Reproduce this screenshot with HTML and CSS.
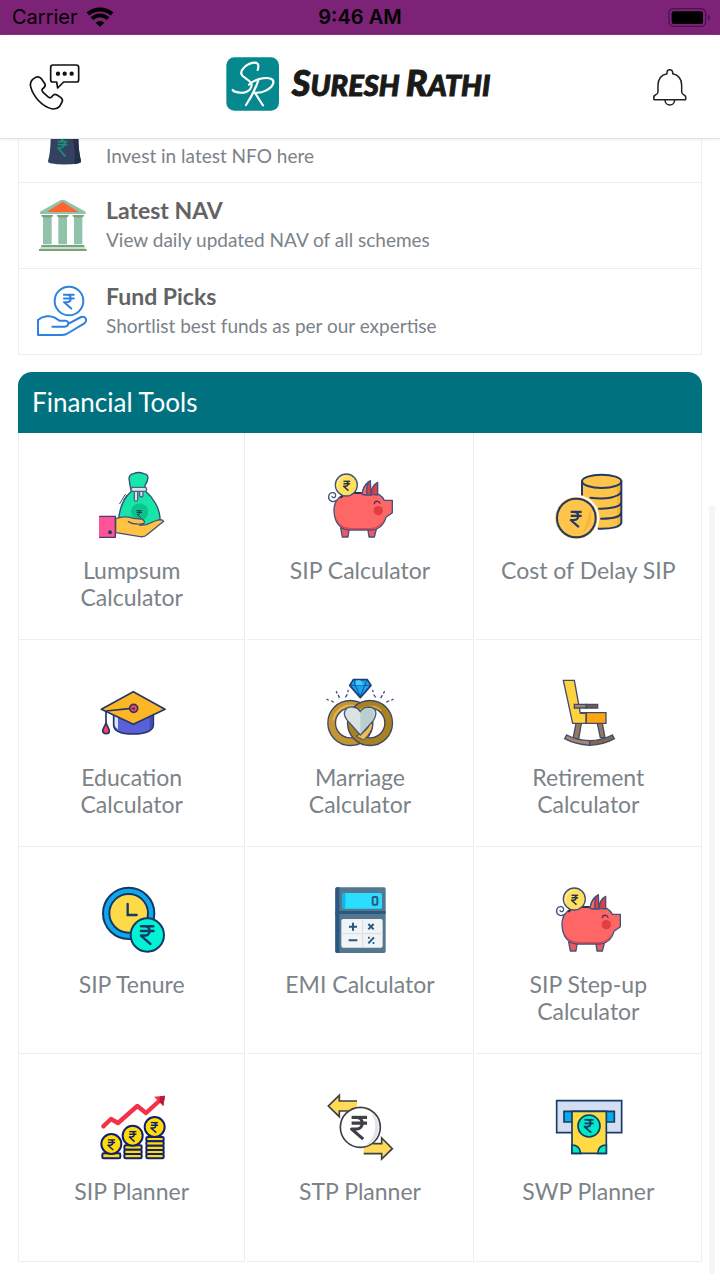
FILE: index.html
```html
<!DOCTYPE html>
<html lang="en">
<head>
<meta charset="utf-8">
<meta name="viewport" content="width=device-width, initial-scale=1">
<title>Suresh Rathi</title>
<link rel="stylesheet" href="styles.css">
</head>
<body>
<svg class="defs" aria-hidden="true">
  <symbol id="rupee" viewBox="0 0 20 26"><path d="M2 2H18M2 8H18M2 2H7C15 2 15 14 7 14H2L14 24.500" fill="none" stroke="currentColor" stroke-width="3.200" stroke-linejoin="round"/></symbol>
  <symbol id="pig" viewBox="42 27 216 216">
    <g stroke="#43527c" stroke-width="4" stroke-linejoin="round" stroke-linecap="round">
      <path d="M80 121C67 130 54 121 56 108C58 96 75 94 77 105C78 113 68 116 66 109" fill="none"/>
      <path d="M92 204L97 231H114L118 204ZM173 204L177 231H193L200 204Z" fill="#ed5961"/>
      <path d="M72 150C72 120 96 98 126 98H185C204 98 216 108 223 121H247V158L228 172C220 199 203 210 180 210H119C90 210 72 185 72 150Z" fill="#ff6666"/>
      <path d="M156 103C159 83 168 69 181 62L183 106ZM184 103C184 83 193 72 203 67V105Z" fill="#dd3d45"/>
      <path d="M156 103C159 85 167 73 174 68C170 83 169 94 171 105Z" fill="#ff6666"/>
      <path d="M93 112L106 99H151" fill="none" stroke="#26324f" stroke-width="6"/>
      <circle cx="109" cy="75" r="33" fill="#ffe05c"/>
      <path d="M193 131C194 122 207 121 210 130" fill="none" stroke="#652f4c"/>
    </g>
    <path d="M79 174C91 207 120 204 148 204H182C201 204 217 190 223 173C217 194 207 207 181 208H120C97 208 84 194 79 174Z" fill="#dc4651"/>
    <circle cx="205" cy="152" r="14" fill="#df3f42"/>
    <path d="M84 88A29 29 0 0 1 106 49" fill="none" stroke="#fff09d" stroke-width="4"/>
    <use href="#rupee" x="98" y="61" width="25" height="33" color="#27324b"/>
  </symbol>
</svg>

<div class="status">
  <div class="carrier"><span>Carrier</span>
    <svg width="28" height="21" viewBox="258 21 84 63" fill="none" stroke="#000"><path d="M264 42C284 24 316 24 336 42" stroke-width="12"/><path d="M276 56C289 43 311 43 324 56" stroke-width="11"/><path d="M287 68Q300 58 313 68L300 80Z" fill="#000" stroke="none"/></svg>
  </div>
  <time>9:46 AM</time>
  <svg class="battery" width="44" height="21" viewBox="924 21 132 63"><rect x="927" y="26" width="110" height="53" rx="13" fill="none" stroke="#48144a" stroke-width="4"/><rect x="935" y="34" width="94" height="38" rx="6"/><path d="M1044 43Q1056 53 1044 63Z" fill="#48144a"/></svg>
</div>

<header class="topbar">
  <button class="icon-button" type="button" aria-label="Contact us">
    <svg width="52" height="50" viewBox="84 186 156 150" fill="none" stroke="#111" stroke-width="5" stroke-linejoin="round" stroke-linecap="round">
      <path d="M159 195H229Q236 195 236 202V239Q236 246 229 246H191L173 264L170 246H159Q152 246 152 239V202Q152 195 159 195Z"/>
      <path d="M98 238L107 232Q116 228 123 235L135 252Q138 260 128 266Q123 270 130 278L146 292Q153 296 158 287Q163 281 171 285L183 293Q190 300 186 306L179 319Q171 328 158 327C125 320 99 288 92 260Q89 247 98 238Z"/>
      <g fill="#111" stroke="none"><circle cx="174" cy="221" r="6.500"/><circle cx="194" cy="221" r="6.500"/><circle cx="215" cy="221" r="6.500"/></g>
    </svg>
  </button>
  <a class="brand" href="#">
    <svg width="53" height="54" viewBox="675 171 159 162" aria-hidden="true">
      <rect x="676" y="172" width="158" height="160" rx="24" fill="#05898f"/>
      <g fill="none" stroke="#fff" stroke-width="6.500" stroke-linecap="round" stroke-linejoin="round">
        <path d="M770 210C775 195 771 187 759 188C735 191 716 211 722 224C726 234 753 241 752 255C750 275 728 281 711 277C703 276 697 274 695 270"/>
        <path d="M773 238C764 265 751 292 735 315M744 254C761 238 791 230 810 236C824 242 816 261 796 271C785 277 774 279 761 278C771 291 778 306 786 316"/>
      </g>
    </svg>
    <span class="brand-name"><b>S</b>URESH <b>R</b>ATHI</span>
  </a>
  <button class="icon-button" type="button" aria-label="Notifications">
    <svg width="36" height="40" viewBox="876 201 108 120" fill="none" stroke="#222" stroke-width="4.500" stroke-linejoin="round">
      <path d="M921 221V216Q922 209 929 209Q937 209 938 216V221C957 225 965 239 965 256V276Q966 283 972 285Q979 287 977 299H882Q879 288 886 285Q893 283 894 276V256C894 239 902 225 921 221Z"/><path d="M915 300C915 320 944 320 944 300"/>
    </svg>
  </button>
</header>

<main class="content">
  <nav class="links">
    <a class="link link-cut" href="#">
      <svg width="52" height="26" viewBox="111 417 156 78"><path d="M152 417H235Q236 455 243 483Q244 488 236 490Q193 497 151 490Q143 488 144 483Q151 460 152 417Z" fill="#334260"/><path d="M218 417H235Q236 455 243 483Q244 488 236 490L222 493Q229 454 218 417Z" fill="#252f48"/><path d="M173 425H202M173 434H202M183 419Q198 424 192 437Q187 445 175 445L196 469" fill="none" stroke="#169180" stroke-width="5"/></svg>
      <span class="link-text"><span class="desc">Invest in latest NFO here</span></span>
    </a>
    <a class="link" href="#">
      <svg width="52" height="54" viewBox="111 54 156 162"><path d="M120 95L181 61Q188 57 195 61L257 95V102H120Z" fill="#91c2aa"/><path d="M141 96L188 65L236 96Z" fill="#ff6531"/><path d="M129 112H155V193H129ZM175 112H201V193H175ZM222 112H247V193H222Z" fill="#91c2aa"/><path d="M123 105H160Q158 113 150 113H133Q125 113 123 105ZM170 105H207Q205 113 197 113H179Q172 113 170 105ZM217 105H253Q251 113 243 113H226Q219 113 217 105ZM124 195H253V201H124ZM117 207H260V213H117Z" fill="#7ba27c"/><path d="M121 202H256V206H121Z" fill="#b4d5bd"/></svg>
      <span class="link-text"><span class="title">Latest NAV</span><span class="desc">View daily updated NAV of all schemes</span></span>
    </a>
    <a class="link" href="#">
      <svg width="52" height="54" viewBox="111 312 156 162" fill="none" stroke="#2d81df" stroke-width="6" stroke-linejoin="round" stroke-linecap="round"><circle cx="207" cy="363" r="43"/><path d="M114 420V465H186Q197 465 205 459L253 430Q261 424 257 415Q252 408 243 411L206 431M114 420C130 407 151 406 164 413L178 422H196Q206 423 205 431Q204 439 194 440H157"/><use href="#rupee" x="188" y="339" width="37" height="51" color="#2d81df"/></svg>
      <span class="link-text"><span class="title">Fund Picks</span><span class="desc">Shortlist best funds as per our expertise</span></span>
    </a>
  </nav>

  <section class="tools">
    <h2>Financial Tools</h2>
    <div class="grid">
      <a class="tool" href="#">
        <svg viewBox="45 27 216 216" stroke-linejoin="round" stroke-linecap="round"><path d="M147 76L144 55Q145 43 158 41Q173 34 188 41Q201 43 201 53Q200 65 192 76L193 93C217 113 235 144 237 173C239 199 213 204 179 206H137C111 202 111 177 116 158C120 135 133 111 151 94Z" fill="#18e6a9" stroke="#304e73" stroke-width="4"/><circle cx="176" cy="156" r="26" fill="#0bc48b"/><path d="M153 82H194Q199 87 195 94H153Q147 88 153 82ZM160 94V120Q165 128 170 120V94M176 94V108Q181 114 186 108V94" fill="#dae3ef" stroke="#52617d" stroke-width="4"/><use href="#rupee" x="166" y="150" width="18" height="24" color="#123b5a"/><path d="M116 131L133 103M122 139L125 134M129 119L137 106" stroke="#43527a" stroke-width="3"/><path d="M104 176C123 169 142 170 157 175L182 177Q193 181 189 190Q184 195 176 196L196 194L222 183Q243 175 248 184L198 224Q190 233 173 229L104 218Z" fill="#ffc344" stroke="#49517a" stroke-width="4"/><path d="M142 185Q158 196 185 191" fill="none" stroke="#49517a" stroke-width="4"/><path d="M54 169H104V233H54Z" fill="#ff5598"/><path d="M56 169H103V232H56" fill="none" stroke="#473e67" stroke-width="4"/><circle cx="87" cy="217" r="6" fill="#303a5d"/></svg>
        <span>Lumpsum Calculator</span>
      </a>
      <a class="tool" href="#"><svg><use href="#pig"/></svg><span>SIP Calculator</span></a>
      <a class="tool" href="#">
        <svg viewBox="36 27 216 216"><path d="M125 63V205H180C215 206 244 199 244 187V63Z" fill="#ffc54a"/><path d="M231 79L244 68V189L231 198Z" fill="#f5b434"/><g fill="none" stroke="#233a68" stroke-width="6" stroke-linecap="round"><ellipse cx="185" cy="64" rx="59" ry="20" fill="#ffc54a"/><path d="M126 64V104M244 64V187C244 201 215 207 176 206M151 113C200 120 240 110 243 95M177 146C210 147 243 140 243 128M183 176C216 176 243 170 243 158"/><circle cx="109" cy="174" r="66" fill="#ffc54a" stroke="#fff"/><circle cx="109" cy="174" r="58" fill="#ffc54a"/></g><path d="M151 144Q165 186 129 219Q142 184 151 144Z" fill="#f8b63a"/><use href="#rupee" x="88" y="149" width="41" height="58" color="#233a68"/></svg>
        <span>Cost of Delay SIP</span>
      </a>
      <a class="tool" href="#">
        <svg viewBox="45 18 216 216" stroke="#263765" stroke-width="5" stroke-linejoin="round"><path d="M98 133V165C98 183 122 192 157 192C192 192 217 183 217 165V133Z" fill="#5b60d9"/><path d="M101 136H111V178Q101 172 101 165Z" fill="#dce5ff" stroke="none"/><path d="M206 137H214V165Q213 174 206 178Z" fill="#4249ba" stroke="none"/><path d="M61 118L157 65L252 118L157 163Z" fill="#fdb725"/><path d="M75 123L152 115M75 123V162" fill="none"/><path d="M75 159C71 170 65 176 65 182Q66 191 75 191Q85 191 85 182C85 176 79 170 75 159Z" fill="#ff4056"/><circle cx="158" cy="115" r="12" fill="#ff4056"/><path d="M152 116H162" stroke-width="5"/></svg>
        <span>Education Calculator</span>
      </a>
      <a class="tool" href="#">
        <svg viewBox="42 18 216 216" stroke-linejoin="round"><circle cx="121" cy="159" r="56" fill="none" stroke="#3d466e" stroke-width="27"/><circle cx="121" cy="159" r="56" fill="none" stroke="#c29630" stroke-width="19"/><path d="M70 151A52 52 0 0 1 133 108" fill="none" stroke="#e0b650" stroke-width="6"/><circle cx="180" cy="159" r="56" fill="none" stroke="#3d466e" stroke-width="27"/><circle cx="180" cy="159" r="56" fill="none" stroke="#a9821f" stroke-width="19"/><path d="M134 142A51 51 0 0 1 214 121" fill="none" stroke="#d4a840" stroke-width="5"/><path d="M138 198Q174 186 181 157L188 164Q187 185 161 210Z" fill="#edbd4e" stroke="#43496c" stroke-width="3"/><path d="M151 195L112 151C94 130 106 109 128 111Q144 112 151 126Q158 112 175 111C198 111 204 130 190 151Z" fill="#d9e3e1" stroke="#485577" stroke-width="4"/><path d="M151 128Q163 112 177 114C194 116 198 134 187 149L151 191Z" fill="#b9cfce"/><path d="M130 29H172L183 46L151 83L119 46Z" fill="#19a5f0" stroke="#193e70" stroke-width="5"/><path d="M121 46H181M136 47L151 78L164 47L170 31M136 47L132 32" fill="none" stroke="#194f9b" stroke-width="3"/><path d="M139 31H151L161 46H137Z" fill="#48c9ff"/><path d="M51 88L55 90M65 93L70 96M79 65L81 69M85 76L88 82M114 61V65M111 74L107 81M188 61L189 65M192 75L196 81M223 65L221 69M216 77L213 83M249 88L245 90M236 93L230 96" stroke="#3d4b75" stroke-width="4" stroke-linecap="round"/></svg>
        <span>Marriage Calculator</span>
      </a>
      <a class="tool" href="#">
        <svg viewBox="36 18 216 216" stroke="#414b70" stroke-width="4" stroke-linejoin="miter"><path d="M108 160H124L116 207H99ZM172 160H187L195 203H181Z" fill="#98785a"/><path d="M70 31H103L121 130H139V160H98Z" fill="#ffd33d"/><path d="M121 128H198V160H139V130Z" fill="#ffa50d"/><path d="M122 128H139V160" fill="none"/><path d="M103 103H139V114H103Z" fill="#a6876b"/><path d="M139 103H173V114H139Z" fill="#755b3f"/><path d="M80 195Q112 211 149 212V226Q105 223 74 206Z" fill="#a58769"/><path d="M149 212Q184 211 217 195L223 206Q192 224 149 226Z" fill="#82694e"/></svg>
        <span>Retirement Calculator</span>
      </a>
      <a class="tool" href="#">
        <svg viewBox="45 24 216 216" stroke="#143969" stroke-width="6" stroke-linecap="round"><circle cx="143" cy="115" r="77" fill="#11a7ec"/><circle cx="143" cy="115" r="58" fill="#ffda48"/><path d="M140 87V120H167" fill="none" stroke-width="7"/><circle cx="199" cy="180" r="50" fill="#00f3d2"/><use href="#rupee" x="175" y="147" width="47" height="65" color="#143969"/></svg>
        <span>SIP Tenure</span>
      </a>
      <a class="tool" href="#">
        <svg viewBox="732 24 216 216"><rect x="766" y="37" width="151" height="197" rx="5" fill="#52778e"/><path d="M771 37H778V234H771Q766 234 766 229V42Q766 37 771 37Z" fill="#295983"/><path d="M766 108H917V117H766Z" fill="#295983"/><rect x="787" y="54" width="119" height="47" rx="5" fill="#2bdeff"/><path d="M792 54H796V101H792Q787 101 787 96V59Q787 54 792 54Z" fill="#09b6ed"/><rect x="784" y="132" width="124" height="86" rx="6" fill="#f1f4f5"/><path d="M848 132V218M784 176H908" stroke="#d9dfe2" stroke-width="3"/><rect x="878" y="66" width="14" height="23" rx="3" fill="none" stroke="#295983" stroke-width="6"/><path d="M807 155H831M819 143V167M865 147L881 163M881 147L865 163M806 196H832M865 205L882 187M864 188H869M878 204H883" stroke="#295983" stroke-width="6"/></svg>
        <span>EMI Calculator</span>
      </a>
      <a class="tool" href="#"><svg><use href="#pig"/></svg><span>SIP Step-up Calculator</span></a>
      <a class="tool" href="#">
        <svg viewBox="45 15 216 216"><path d="M67 124L90 102L111 114L169 63L195 84L241 42" fill="none" stroke="#f2314b" stroke-width="13" stroke-linejoin="round" stroke-linecap="round"/><path d="M219 35L252 32L247 63Z" fill="#f2314b"/><path d="M237 34L252 32L247 63L235 50Z" fill="#ba173e"/><g fill="#ffdc08" stroke="#101f70" stroke-width="6"><rect x="64" y="205" width="54" height="15" rx="4"/><rect x="130" y="181" width="52" height="13" rx="4"/><rect x="130" y="194" width="52" height="13" rx="4"/><rect x="130" y="207" width="52" height="13" rx="4"/><rect x="196" y="156" width="52" height="13" rx="4"/><rect x="196" y="169" width="52" height="13" rx="4"/><rect x="196" y="182" width="52" height="13" rx="4"/><rect x="196" y="195" width="52" height="13" rx="4"/><rect x="196" y="207" width="52" height="13" rx="4"/><circle cx="91" cy="177" r="30"/><circle cx="155" cy="152" r="30"/><circle cx="221" cy="126" r="30"/></g><g color="#101f70"><use href="#rupee" x="78" y="162" width="27" height="35"/><use href="#rupee" x="142" y="137" width="27" height="35"/><use href="#rupee" x="207" y="110" width="27" height="35"/></g></svg>
        <span>SIP Planner</span>
      </a>
      <a class="tool" href="#">
        <svg viewBox="732 15 216 216"><path d="M831 48H778V31L745 63L778 95V78H831Z" fill="#ffda59"/><path d="M831 48H778V31L745 63L778 95V78H805" fill="none" stroke="#3e4045" stroke-width="5"/><path d="M851 176H905V159L937 191L905 222V206H851Z" fill="#ffda59"/><path d="M851 206H905V222L937 191L905 159V176H878" fill="none" stroke="#3e4045" stroke-width="5"/><circle cx="841" cy="127" r="60" fill="#fff" stroke="#3e4045" stroke-width="5"/><path d="M865 74Q913 106 887 161Q876 177 855 183C895 152 894 102 865 74Z" fill="#e3e4ea"/><use href="#rupee" x="809" y="91" width="58" height="76" color="#3e4045"/></svg>
        <span>STP Planner</span>
      </a>
      <a class="tool" href="#">
        <svg viewBox="66 15 216 216" stroke="#153c66" stroke-width="5"><path d="M80 47H275V143H80Z" fill="#d3def3"/><path d="M102 79H253V111H102Z" fill="#08a9ef"/><path d="M126 79H229V205H126Z" fill="#ffda42"/><path d="M126 180Q149 180 152 205H126ZM229 180Q205 180 203 205H229Z" fill="#00ebc5"/><circle cx="177" cy="123" r="33" fill="#00ebc5"/><use href="#rupee" x="160" y="101" width="34" height="45" color="#153c66"/></svg>
        <span>SWP Planner</span>
      </a>
    </div>
  </section>
  <div class="scroll-thumb"></div>
</main>
</body>
</html>
```
FILE: styles.css
```css
* { box-sizing: border-box; }
body {
  margin: 0;
  background: #fff;
  font-family: Lato, sans-serif;
  color: #7b8288;
}
a { color: inherit; text-decoration: none; }
svg { display: block; flex: none; }
.defs { position: absolute; width: 0; height: 0; }

.status {
  display: grid;
  grid-template-columns: 1fr auto 1fr;
  align-items: center;
  height: 35px;
  padding: 0 8px;
  background: #7c2277;
  color: #000;
  font: 20px/35px Inter, sans-serif;
}
.status time { font-weight: 600; }
.carrier { display: flex; align-items: center; gap: 8px; padding-left: 4px; }
.battery { justify-self: end; }

.topbar {
  display: grid;
  grid-template-columns: 1fr auto 1fr;
  align-items: center;
  height: 104px;
  padding: 0 32px 0 28px;
  border-bottom: 1px solid #e2e2e2;
  box-shadow: 0 1px 2px #f0f0f0;
}
.icon-button { justify-self: start; padding: 0; border: 0; background: none; }
.icon-button:last-child { justify-self: end; }
.brand { display: flex; align-items: center; gap: 13px; padding-bottom: 6px; color: #1a1a18; }
.brand-name {
  font-size: 29px;
  font-weight: 900;
  font-style: italic;
  line-height: 40px;
  white-space: nowrap;
  -webkit-text-stroke: 1px #1a1a18;
}
.brand-name b { font-size: 36px; font-weight: 900; }

.content { position: relative; padding: 0 18px 18px; }
.links { border: solid #ededf0; border-width: 0 1px; }
.link {
  display: flex;
  align-items: center;
  gap: 17px;
  min-height: 86px;
  padding: 0 18px 2px;
  border-bottom: 1px solid #ededf0;
}
.link-cut { align-items: flex-start; min-height: 44px; }
.link-cut .link-text { padding-top: 2px; }
.link-text { display: flex; flex-direction: column; line-height: 30px; }
.title { font-size: 23px; font-weight: 700; color: #636363; }
.desc { font-size: 19px; }

.tools { margin-top: 17px; }
.tools h2 {
  margin: 0;
  padding: 0 14px;
  border-radius: 14px 14px 0 0;
  background: #00727f;
  color: #fff;
  font-size: 26px;
  font-weight: 400;
  line-height: 61px;
}
.grid {
  display: grid;
  grid-template-columns: repeat(3, 1fr);
  column-gap: 2px;
  border-left: 1px solid #ededed;
}
.tool {
  display: flex;
  flex-direction: column;
  align-items: center;
  gap: 16px;
  min-height: 207px;
  padding: 36px 24px 24px;
  border: solid #ededed;
  border-width: 0 1px 1px 0;
  font-size: 23px;
  line-height: 27px;
  text-align: center;
}
.tool:nth-last-child(-n+3) { min-height: 208px; }
.tool svg { width: 72px; height: 72px; }
.tool span { max-width: 180px; }

.scroll-thumb {
  position: absolute;
  top: 367px;
  right: 5px;
  bottom: 6px;
  width: 6px;
  border-radius: 3px;
  background: #f5f5f5;
}
```
